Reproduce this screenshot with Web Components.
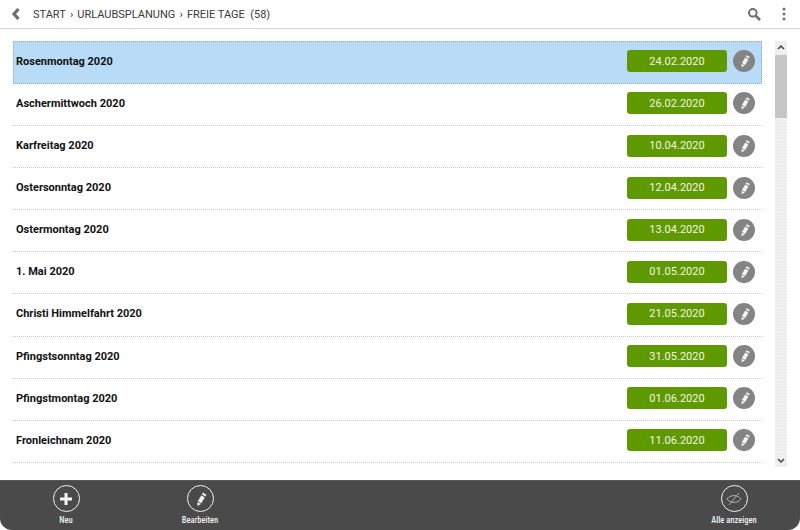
<!DOCTYPE html>
<html><head><meta charset="utf-8"><style>
html,body{margin:0;padding:0;background:#fff;overflow:hidden}
body{width:800px;height:530px;font-family:Roboto,"Liberation Sans",sans-serif}
</style></head><body>
<app-shell>
<top-bar slot="top"></top-bar>
<holiday-list slot="main">
<holiday-row name="Rosenmontag 2020" date="24.02.2020" selected></holiday-row>
<holiday-row name="Aschermittwoch 2020" date="26.02.2020"></holiday-row>
<holiday-row name="Karfreitag 2020" date="10.04.2020"></holiday-row>
<holiday-row name="Ostersonntag 2020" date="12.04.2020"></holiday-row>
<holiday-row name="Ostermontag 2020" date="13.04.2020"></holiday-row>
<holiday-row name="1. Mai 2020" date="01.05.2020"></holiday-row>
<holiday-row name="Christi Himmelfahrt 2020" date="21.05.2020"></holiday-row>
<holiday-row name="Pfingstsonntag 2020" date="31.05.2020"></holiday-row>
<holiday-row name="Pfingstmontag 2020" date="01.06.2020"></holiday-row>
<holiday-row name="Fronleichnam 2020" date="11.06.2020"></holiday-row>
</holiday-list>
<bottom-bar slot="bottom"></bottom-bar>
</app-shell>
<script>
const PEN='<path d="M14.900 5.600l3.500 2.100-1 1.700-3.500-2.100zM13.300 8.300l3.500 2.100-3.500 5.900-3.500-2.100zM9.500 14.900l3.500 2.100-3.600 1.900z" fill="currentColor"/>';
class AppShell extends HTMLElement{constructor(){super();this.attachShadow({mode:'open'}).innerHTML=`<style>
:host{display:flex;flex-direction:column;width:800px;height:530px}
.m{flex:1;min-height:0}
</style><slot name="top"></slot><div class="m"><slot name="main"></slot></div><slot name="bottom"></slot>`}}
class TopBar extends HTMLElement{constructor(){super();this.attachShadow({mode:'open'}).innerHTML=`<style>
:host{display:flex;align-items:center;box-sizing:border-box;height:29px;border-bottom:1px solid #d4d4d4;font-size:11px;padding:0 14px 0 10px}
svg{display:block}
.t{margin-left:11px;white-space:pre;flex:1;color:#3a3a3a}
.a{margin:0 1.400px;}
.s{margin-right:21px}
</style>
<svg width="12" height="14" viewBox="0 0 12 14"><path d="M8.500 2L4 7l4.500 5" fill="none" stroke="#6e6e6e" stroke-width="3.200"/></svg>
<span class="t">START<span class="a"> › </span>URLAUBSPLANUNG<span class="a"> › </span>FREIE TAGE  (58)</span>
<svg class="s" width="14" height="14" viewBox="0 0 14 14"><circle cx="5.800" cy="5.800" r="3.800" fill="none" stroke="#6e6e6e" stroke-width="2"/><path d="M8.800 8.800L13 13" stroke="#6e6e6e" stroke-width="2.600"/></svg>
<svg width="4" height="14" viewBox="0 0 4 14"><circle cx="2" cy="2" r="1.500" fill="#707070"/><circle cx="2" cy="7" r="1.500" fill="#707070"/><circle cx="2" cy="12" r="1.500" fill="#707070"/></svg>`}}
class HolidayList extends HTMLElement{constructor(){super();this.attachShadow({mode:'open'}).innerHTML=`<style>
:host{display:flex;height:451px;box-sizing:border-box;padding:12px 13px 0 13px}
.l{width:749px;display:flex;flex-direction:column}
.sb{margin-left:13px;width:12px;height:426px;display:flex;flex-direction:column;align-items:center;justify-content:space-between;background:#f0f0f0 radial-gradient(#e2e2e2 30%,transparent 35%) 0 0/3px 3px;position:relative}
.th{position:absolute;left:0;right:0;top:14px;height:63px;background:#c6c6c6}
svg{display:block;margin:3px 0;position:relative}
</style><div class="l"><slot></slot></div>
<div class="sb"><svg width="8" height="6" viewBox="0 0 8 6"><path d="M1 5l3-3 3 3" fill="none" stroke="#444" stroke-width="1.500"/></svg><div class="th"></div><svg width="8" height="6" viewBox="0 0 8 6"><path d="M1 1l3 3 3-3" fill="none" stroke="#444" stroke-width="1.500"/></svg></div>`}}
class HolidayRow extends HTMLElement{connectedCallback(){if(this.shadowRoot)return;this.attachShadow({mode:'open'}).innerHTML=`<style>
:host{display:flex;align-items:center;box-sizing:border-box;height:42.100px;flex:none;padding:0 7px 2.200px 3px;border-bottom:1px dotted #c8c8c8;font-size:11px;font-weight:700;color:#111}
:host([selected]){height:43px;background:#b8dcf8;border:1px dotted #8fa9bf;padding:0 6px 3px 2px}
.n{flex:1}
.d{width:100px;height:22px;background:#5f9900;border-radius:3px;color:#f2f6e6;font-size:11px;font-weight:400;display:flex;align-items:center;justify-content:center}
.b{width:22px;height:22px;margin-left:6px;border-radius:50%;background:#848484;color:#f4f4f4}
svg{display:block}
</style><span class="n">${this.getAttribute('name')}</span><span class="d">${this.getAttribute('date')}</span><span class="b"><svg width="22" height="22" viewBox="0 0 24 24">${PEN}</svg></span>`}}
class ActionItem extends HTMLElement{connectedCallback(){if(this.shadowRoot)return;this.attachShadow({mode:'open'}).innerHTML=`<style>
:host{display:flex;flex-direction:column;align-items:center;width:80px;color:#f0f0f0;font-family:"Roboto Condensed",Roboto,sans-serif}
.c{width:27px;height:27px;box-sizing:border-box;border:1.500px solid #f2f2f2;border-radius:50%;display:flex;align-items:center;justify-content:center;margin-top:5px}
.l{font-size:8.500px;font-weight:500;margin-top:3px;line-height:11px;white-space:nowrap}
svg{display:block}
</style><span class="c"><slot></slot></span><span class="l">${this.getAttribute('label')}</span>`}}
class BottomBar extends HTMLElement{constructor(){super();this.attachShadow({mode:'open'}).innerHTML=`<style>
:host{display:flex;height:50px;background:#4a4a4a;border-radius:0 0 12px 12px;padding:0 26px;box-sizing:border-box;box-shadow:inset 0 1px 0 #555}
.g{flex:1;display:flex}
.e{margin-left:54px}
svg{display:block}
</style><div class="g"><action-item label="Neu"><svg width="16" height="16" viewBox="0 0 16 16"><path d="M8 2v12M2 8h12" stroke="#f4f4f4" stroke-width="3"/></svg></action-item><action-item class="e" label="Bearbeiten"><svg width="24" height="24" viewBox="0 0 24 24" style="color:#f0f0f0">${PEN}</svg></action-item></div>
<action-item label="Alle anzeigen"><svg width="18" height="18" viewBox="0 0 18 18" fill="none" stroke="#b0b0b0" stroke-width="1"><path d="M2 9c3-4.500 11-4.500 14 0-3 4.500-11 4.500-14 0z"/><path d="M14 3L4 15"/></svg></action-item>`}}
customElements.define('action-item',ActionItem);
customElements.define('holiday-row',HolidayRow);
customElements.define('holiday-list',HolidayList);
customElements.define('top-bar',TopBar);
customElements.define('bottom-bar',BottomBar);
customElements.define('app-shell',AppShell);
</script>
</body></html>
